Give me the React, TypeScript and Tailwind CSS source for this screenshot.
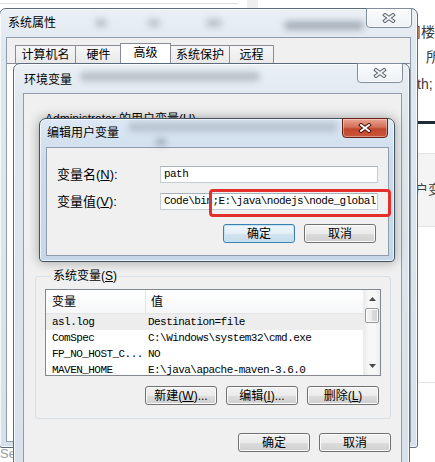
import React from "react";

const mono = "font-['Liberation_Mono','Noto_Sans_CJK_SC',monospace] text-[11px] tracking-[-0.55px]";
const glass =
  "bg-[linear-gradient(180deg,#eaf0f5,#dfe7ef_40px,#d8e1eb)] shadow-[inset_0_0_0_1px_rgba(255,255,255,0.75)]";
const glassActive =
  "bg-[linear-gradient(180deg,#dce8f4,#cddcec_40px,#c6d7e9)] shadow-[inset_0_0_0_1px_rgba(255,255,255,0.7),0_0_12px_rgba(0,0,0,0.35)]";

function XGlyph({ active }: { active?: boolean }) {
  const d = "M3 2 L11 8 M11 2 L3 8";
  return (
    <svg width="14" height="10" viewBox="0 0 14 10">
      <path d={d} stroke={active ? "#4a140a" : "#59636e"} strokeWidth="3.8" strokeLinecap="square" />
      <path d={d} stroke={active ? "#ffffff" : "#f3f5f7"} strokeWidth="1.9" strokeLinecap="square" />
    </svg>
  );
}

function CloseBtn({ active, right }: { active?: boolean; right: string }) {
  return (
    <div
      className={`absolute top-[-1px] ${right} flex h-[20px] w-[46px] items-center justify-center rounded-b-[4px] border ${
        active
          ? "border-[#6a2417] bg-[linear-gradient(180deg,#e8a492,#d46f58_45%,#c2462e_55%,#c9573c)] shadow-[inset_0_0_0_1px_rgba(255,255,255,0.35)]"
          : "border-[#7f8d9c] bg-[linear-gradient(180deg,rgba(255,255,255,0.75),rgba(255,255,255,0.3))] shadow-[inset_0_0_0_1px_rgba(255,255,255,0.7)]"
      }`}
    >
      <XGlyph active={active} />
    </div>
  );
}

function Btn({ label, primary }: { label: React.ReactNode; primary?: boolean }) {
  return (
    <div
      className={`flex h-[19px] w-[72px] items-center justify-center rounded-[3px] border text-[12px] leading-none ${
        primary
          ? "border-[#3c7fb1] bg-[linear-gradient(180deg,#eef6fb,#e3eff7_50%,#d2e4f0_51%,#c6dcec)] shadow-[inset_0_0_0_1px_#c5e4f7]"
          : "border-[#707070] bg-[linear-gradient(180deg,#f2f2f2,#ebebeb_50%,#dddddd_51%,#cfcfcf)] shadow-[inset_0_0_0_1px_#fbfbfb]"
      }`}
    >
      {label}
    </div>
  );
}

function Blob({ c }: { c: string }) {
  return <div className={`absolute rounded-full blur-[3px] ${c}`} />;
}

function PageBehind() {
  return (
    <>
      <div className="absolute left-0 top-[3px] h-px w-[238px] bg-[#dedede]" />
      <div className="absolute left-[247px] top-0 h-[8px] w-[11px] bg-[#efefef]" />
      <div className="absolute left-[400px] top-0 flex h-full w-[35px] flex-col overflow-hidden text-[14px] leading-[14px] text-[#3a3a3a]">
        <span className="ml-[7px] mt-[25px] whitespace-nowrap">司楼</span>
        <span className="ml-[26px] mt-[11px]">所</span>
        <span className="ml-[17px] mt-[13px] whitespace-nowrap">th;</span>
        <div className="mt-[30px] h-[3px] bg-[#1f2b36]" />
        <div className="mt-[29px] flex h-[74px] items-center whitespace-nowrap border-y border-[#e3e3e3] bg-[#f4f4f4] pl-[15px] text-[13px]">
          户变
        </div>
        <div className="mt-[155px] h-px bg-[#e2e2e2]" />
      </div>
      <span className="absolute left-0 top-[447px] text-[13px] leading-[14px] text-[#9a9a9a]">Se</span>
    </>
  );
}

const tabs = [
  { t: "计算机名", w: "w-[60px]" },
  { t: "硬件", w: "w-[46px]" },
  { t: "高级", w: "w-[51px]", sel: true },
  { t: "系统保护", w: "w-[59px]" },
  { t: "远程", w: "w-[45px]" },
];

function SystemWindow() {
  return (
    <div className={`absolute left-[-1px] top-[8px] flex h-[440px] w-[419px] flex-col rounded-t-[7px] rounded-b-[3px] border border-[#5c6b7b] ${glass}`}>
      <div className="relative flex h-[28px] shrink-0 items-center pl-[8px] text-[12px] leading-[16px]">
        <Blob c="left-[95px] top-[10px] h-[8px] w-[12px] bg-[#8d98a4]/50" />
        <Blob c="left-[148px] top-[10px] h-[8px] w-[12px] bg-[#8d98a4]/50" />
        <Blob c="left-[206px] top-[10px] h-[8px] w-[16px] bg-[#8d98a4]/50" />
        <Blob c="left-[284px] top-[12px] h-[9px] w-[80px] bg-[#7d8894]/60" />
        <span className="relative">系统属性</span>
        <CloseBtn right="right-[5px]" />
      </div>
      <div className="mx-[6px] mb-[5px] flex flex-1 flex-col border border-[#8e9cab] bg-[#f0f0f0]">
        <div className="flex h-[25px] items-end pl-[8px] pt-[5px]">
          {tabs.map((x) =>
            x.sel ? (
              <div
                key={x.t}
                className={`relative z-10 -mx-[1px] flex h-[20px] ${x.w} items-start justify-center border border-b-0 border-[#898c95] bg-white pt-[2px] text-[12px] leading-[14px]`}
              >
                {x.t}
              </div>
            ) : (
              <div
                key={x.t}
                className={`flex h-[18px] ${x.w} items-center justify-center border border-b-0 border-r-0 border-[#898c95] bg-[linear-gradient(180deg,#f7f7f7,#e9e9e9)] text-[12px] leading-[14px] last:border-r`}
              >
                {x.t}
              </div>
            )
          )}
        </div>
        <div className="flex-1 border-t border-[#898c95] bg-white" />
      </div>
    </div>
  );
}

const rows = [
  ["asl.log", "Destination=file"],
  ["ComSpec", "C:\\Windows\\system32\\cmd.exe"],
  ["FP_NO_HOST_C...", "NO"],
  ["MAVEN_HOME", "E:\\java\\apache-maven-3.6.0"],
];

function VarList() {
  return (
    <div className="flex h-[87px] border border-[#828790] bg-white">
      <div className="flex-1 overflow-hidden">
        <div className="flex h-[24px] items-center border-b border-[#e5e5e5] bg-[linear-gradient(180deg,#ffffff,#f6f7f9)] text-[12px] leading-[14px]">
          <div className="flex h-full w-[100px] items-center border-r border-[#e5e5e5] pl-[6px]">变量</div>
          <div className="pl-[5px]">值</div>
        </div>
        {rows.map(([k, v], i) => (
          <div key={k} className={`flex h-[16px] items-center ${mono} ${i === 0 ? "bg-[#ededed]" : ""}`}>
            <div className="w-[100px] whitespace-nowrap pl-[6px]">{k}</div>
            <div className="whitespace-nowrap pl-[2px]">{v}</div>
          </div>
        ))}
      </div>
      <div className="flex w-[17px] flex-col items-center border-l border-[#ececec] bg-[linear-gradient(90deg,#ececec,#f7f7f7_30%,#f7f7f7_70%,#ececec)]">
        <div className="flex h-[18px] items-center justify-center">
          <svg width="7" height="4" viewBox="0 0 7 4">
            <path d="M3.5 0 L7 4 L0 4 Z" fill="#4a4a4a" />
          </svg>
        </div>
        <div className="h-[15px] w-[14px] rounded-[2px] border border-[#979797] bg-[linear-gradient(90deg,#f4f4f4,#ececec_45%,#dadada_55%,#d2d2d2)] shadow-[inset_0_0_0_1px_#fbfbfb]" />
        <div className="flex-1" />
        <div className="flex h-[18px] items-center justify-center">
          <svg width="7" height="4" viewBox="0 0 7 4">
            <path d="M0 0 L7 0 L3.5 4 Z" fill="#4a4a4a" />
          </svg>
        </div>
      </div>
    </div>
  );
}

function EnvWindow() {
  return (
    <div className={`absolute left-[13px] top-[63px] flex h-[420px] w-[397px] flex-col rounded-t-[7px] border border-[#5c6b7b] ${glass}`}>
      <div className="relative flex h-[29px] shrink-0 items-center pl-[10px] pt-[3px] text-[12px] leading-[16px]">
        <Blob c="left-[66px] top-[8px] h-[9px] w-[180px] bg-[#7d8894]/45" />
        <span className="relative">环境变量</span>
        <CloseBtn right="right-[6px]" />
      </div>
      <div className="ml-[9px] mr-[7px] flex flex-1 flex-col border border-[#8e9cab] bg-[#f0f0f0]">
        <div className="pl-[21px] pt-[18px] text-[12px] leading-[14px]">
          Administrator 的用户变量(<span className="underline">U</span>)
        </div>
        <fieldset className="ml-[11px] mr-[10px] mt-[143px] rounded-[3px] border border-[#d5dfe5] px-[9px] pb-[13px] pt-[6px]">
          <legend className="ml-[6px] px-[2px] text-[12px] leading-[14px]">
            系统变量(<span className="underline">S</span>)
          </legend>
          <VarList />
          <div className="mr-[2px] mt-[10px] flex justify-end gap-[9px]">
            <Btn label={<>新建(<span className="underline">W</span>)...</>} />
            <Btn label={<>编辑(<span className="underline">I</span>)...</>} />
            <Btn label={<>删除(<span className="underline">L</span>)</>} />
          </div>
        </fieldset>
        <div className="mr-[10px] mt-[14px] flex justify-end gap-[9px]">
          <Btn label="确定" />
          <Btn label="取消" />
        </div>
      </div>
    </div>
  );
}

function EditWindow() {
  return (
    <div className={`absolute left-[39px] top-[118px] flex h-[144px] w-[356px] flex-col rounded-t-[7px] rounded-b-[4px] border border-[#3f5366] ${glassActive}`}>
      <div className="relative flex h-[28px] shrink-0 items-center pl-[7px] text-[12px] leading-[16px]">
        <Blob c="left-[88px] top-[3px] h-[10px] w-[210px] bg-[#7d8894]/35" />
        <Blob c="left-[116px] top-[20px] h-[6px] w-[10px] bg-[#55606b]/50" />
        <span className="relative">编辑用户变量</span>
        <CloseBtn active right="right-[6px]" />
      </div>
      <div className="mb-[5px] ml-[6px] mr-[5px] flex flex-1 flex-col border border-[#8e9cab] bg-[#f0f0f0] pl-[10px] pr-[10px] pt-[18px]">
        <div className="flex items-center">
          <div className="w-[103px] text-[13px] leading-[15px]">
            变量名(<span className="underline">N</span>):
          </div>
          <div className={`flex h-[17px] w-[218px] items-center border border-[#c4ccd5] border-t-[#a7b1bc] bg-white pl-[3px] ${mono}`}>
            path
          </div>
        </div>
        <div className="mt-[10px] flex items-center">
          <div className="w-[103px] text-[13px] leading-[15px]">
            变量值(<span className="underline">V</span>):
          </div>
          <div className={`flex h-[17px] w-[218px] items-center overflow-hidden whitespace-nowrap border border-[#c4ccd5] border-t-[#a7b1bc] bg-white pl-[3px] ${mono}`}>
            Code\bin;E:\java\nodejs\node_global
          </div>
        </div>
        <div className="mr-[2px] mt-[14px] flex justify-end gap-[9px]">
          <Btn label="确定" primary />
          <Btn label="取消" />
        </div>
      </div>
    </div>
  );
}

export default function App() {
  return (
    <div className="relative h-[462px] w-[435px] overflow-hidden bg-white font-['Liberation_Sans','Noto_Sans_CJK_SC',sans-serif] text-black">
      <PageBehind />
      <SystemWindow />
      <EnvWindow />
      <EditWindow />
      <div className="absolute left-[209px] top-[189px] h-[28px] w-[182px] rounded-[4px] border-[3px] border-[#e3302a]" />
    </div>
  );
}
